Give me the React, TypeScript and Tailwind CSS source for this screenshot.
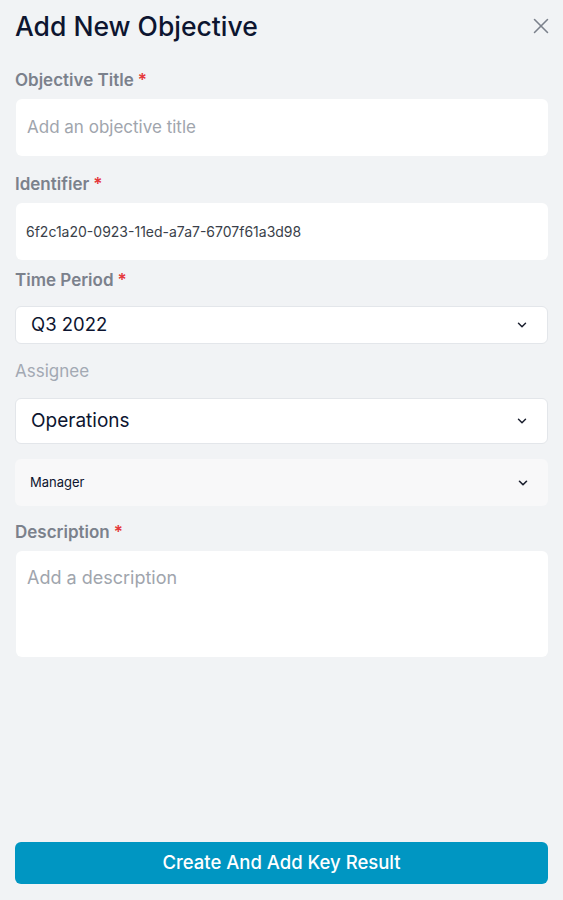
import { X, ChevronDown } from 'lucide-react';

function Label({ text, required = true, muted = false }: { text: string; required?: boolean; muted?: boolean }) {
  return (
    <div
      className={`text-[17px] leading-6 ${muted ? 'font-normal text-[#a3a9b3]' : 'font-semibold text-[#7b818c]'}`}
    >
      {text}
      {required && <span className="ml-1 text-[#e5383b]">*</span>}
    </div>
  );
}

export default function App() {
  return (
    <div
      className="min-h-[900px] w-full bg-[#f1f3f5] px-[15px] flex flex-col"
      style={{ fontFamily: 'Inter, "Noto Sans", sans-serif' }}
    >
      <div className="flex items-center justify-between pt-[10px]">
        <h1 className="text-[26.5px] leading-8 font-medium text-[#0d1530]">Add New Objective</h1>
        <X className="w-[26px] h-[26px] text-[#7b818c] -mr-[6px]" strokeWidth={1.4} />
      </div>

      <div className="mt-[26px]">
        <Label text="Objective Title" />
      </div>
      <div className="mt-[7px] ml-px h-[57px] rounded-md bg-white flex items-center px-[11px] text-[17px] text-[#a0a5ad]">
        Add an objective title
      </div>

      <div className="mt-[16px]">
        <Label text="Identifier" />
      </div>
      <div className="mt-[7px] ml-px h-[57px] rounded-md bg-white flex items-center px-[10px] text-[14px] text-[#3a3f4a]">
        6f2c1a20-0923-11ed-a7a7-6707f61a3d98
      </div>

      <div className="mt-[8px]">
        <Label text="Time Period" />
      </div>
      <div className="mt-[14px] h-[38px] rounded-md bg-white border border-[#e3e6ea] flex items-center justify-between pl-[15px] pr-[18px]">
        <span className="text-[18.5px] text-[#0d1530]">Q3 2022</span>
        <ChevronDown className="w-[14px] h-[14px] text-[#1a1f2e]" strokeWidth={2.5} />
      </div>

      <div className="mt-[15px]">
        <Label text="Assignee" required={false} muted />
      </div>
      <div className="mt-[15px] h-[46px] rounded-md bg-white border border-[#e3e6ea] flex items-center justify-between pl-[15px] pr-[18px]">
        <span className="text-[19px] text-[#0d1530]">Operations</span>
        <ChevronDown className="w-[14px] h-[14px] text-[#1a1f2e]" strokeWidth={2.5} />
      </div>

      <div className="mt-[15px] h-[47px] rounded-md bg-[#f8f8f9] flex items-center justify-between pl-[15px] pr-[18px]">
        <span className="text-[13px] text-[#0d1530]">Manager</span>
        <ChevronDown className="w-[14px] h-[14px] text-[#1a1f2e]" strokeWidth={2.8} />
      </div>

      <div className="mt-[14px]">
        <Label text="Description" />
      </div>
      <div className="mt-[7px] ml-px h-[106px] rounded-md bg-white px-[11px] pt-[15px] text-[18px] leading-6 text-[#a0a5ad]">
        Add a description
      </div>

      <div className="flex-1" />

      <button className="mb-[16px] h-[42px] w-full rounded-md bg-[#0096c2] text-white text-[18.5px] font-medium">
        Create And Add Key Result
      </button>
    </div>
  );
}
